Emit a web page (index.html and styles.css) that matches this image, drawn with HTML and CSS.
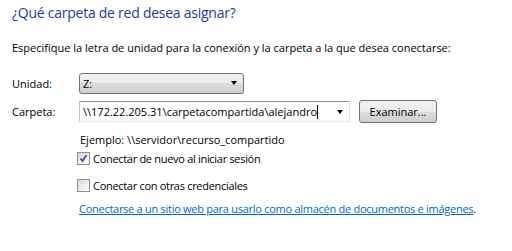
FILE: index.html
```html
<!DOCTYPE html>
<html lang="es">
<head>
<meta charset="utf-8">
<link rel="stylesheet" href="styles.css">
</head>
<body>
<div class="page">
  <h1 class="title">¿Qué carpeta de red desea asignar?</h1>
  <p class="intro">Especifique la letra de unidad para la conexión y la carpeta a la que desea conectarse:</p>
  <div class="form">
    <div class="row row-drive">
      <span class="label">Unidad:</span>
      <div class="combo combo-drive">
        <span class="combo-text">Z:</span>
        <span class="arrow"></span>
      </div>
    </div>
    <div class="row row-folder">
      <span class="label">Carpeta:</span>
      <div class="edit-combo">
        <span class="combo-text">\\172.22.205.31\carpetacompartida\alejandro<span class="caret"></span></span>
        <span class="arrow"></span>
      </div>
      <button class="btn" type="button">Examinar...</button>
    </div>
    <div class="options">
      <div class="example">Ejemplo: \\servidor\recurso_compartido</div>
      <label class="check"><span class="box checked"><svg width="9" height="9" viewBox="0 0 9 9"><path d="M1.5 4.5 L3.5 7 L7.5 1" fill="none" stroke="#3b4fa8" stroke-width="1.8"/></svg></span>Conectar de nuevo al iniciar sesión</label>
      <label class="check"><span class="box"></span>Conectar con otras credenciales</label>
      <div class="linkline"><a class="link" href="#">Conectarse a un sitio web para usarlo como almacén de documentos e imágenes</a>.</div>
    </div>
  </div>
</div>
</body>
</html>
```
FILE: styles.css
```css
html, body {
  margin: 0;
  padding: 0;
  background: #ffffff;
}
body {
  font-family: "Open Sans", "Noto Sans", sans-serif;
  font-size: 11px;
  color: #000;
}
.page {
  padding: 3px 0 0 12px;
}
.title {
  margin: 0;
  font-weight: normal;
  font-size: 14px;
  letter-spacing: -0.25px;
  line-height: 20px;
  color: #1e3a9c;
}
.intro {
  margin: 17px 0 0 0;
  line-height: 15px;
}
.form {
  margin-top: 18px;
}
.row {
  display: flex;
  align-items: center;
}
.row-drive {
  height: 20px;
}
.row-folder {
  margin-top: 7px;
  height: 23px;
}
.label {
  width: 67px;
}
.combo {
  box-sizing: border-box;
  width: 165px;
  height: 21px;
  border: 1px solid #707070;
  border-radius: 3px;
  background: linear-gradient(#f2f2f2 0%, #ebebeb 50%, #dddddd 50%, #cfcfcf 100%);
  display: flex;
  align-items: center;
  padding-left: 3px;
  padding-right: 6px;
  justify-content: space-between;
}
.edit-combo {
  box-sizing: border-box;
  width: 271px;
  height: 21px;
  border: 1px solid #abadb3;
  border-top-color: #8e9199;
  border-left-color: #c0c4cc;
  border-right-color: #dbdfe6;
  border-bottom-color: #e3e9ef;
  background: #fff;
  display: flex;
  align-items: center;
  padding-left: 3px;
  padding-right: 6px;
  justify-content: space-between;
}
.combo-text {
  line-height: 15px;
}
.caret {
  display: inline-block;
  width: 1px;
  height: 14px;
  background: #000;
  vertical-align: -3px;
}
.arrow {
  width: 0;
  height: 0;
  border-left: 3.5px solid transparent;
  border-right: 3.5px solid transparent;
  border-top: 4px solid #000;
}
.btn {
  box-sizing: border-box;
  margin-left: 9px;
  width: 78px;
  height: 23px;
  border: 1px solid #707070;
  border-radius: 3px;
  background: linear-gradient(#f2f2f2 0%, #ebebeb 50%, #dddddd 50%, #cfcfcf 100%);
  font-family: inherit;
  font-size: 11px;
  color: #000;
  padding: 0;
}
.options {
  margin-left: 67px;
  margin-top: 9px;
  display: flex;
  flex-direction: column;
}
.example {
  line-height: 15px;
  padding-left: 1px;
}
.check {
  display: flex;
  align-items: center;
  margin-top: 2px;
  margin-left: -2px;
  line-height: 15px;
  height: 18px;
  letter-spacing: -0.3px;
}
.check + .check {
  margin-top: 9px;
}
.box {
  box-sizing: border-box;
  width: 13px;
  height: 13px;
  border: 1px solid #8f8f8f;
  background: linear-gradient(135deg, #dcdcdc, #fbfbfb);
  margin-right: 3px;
  display: flex;
  align-items: center;
  justify-content: center;
}
.linkline {
  margin-top: 7px;
  line-height: 15px;
}
.link {
  color: #0066cc;
  text-decoration: underline;
  letter-spacing: -0.27px;
}
```
